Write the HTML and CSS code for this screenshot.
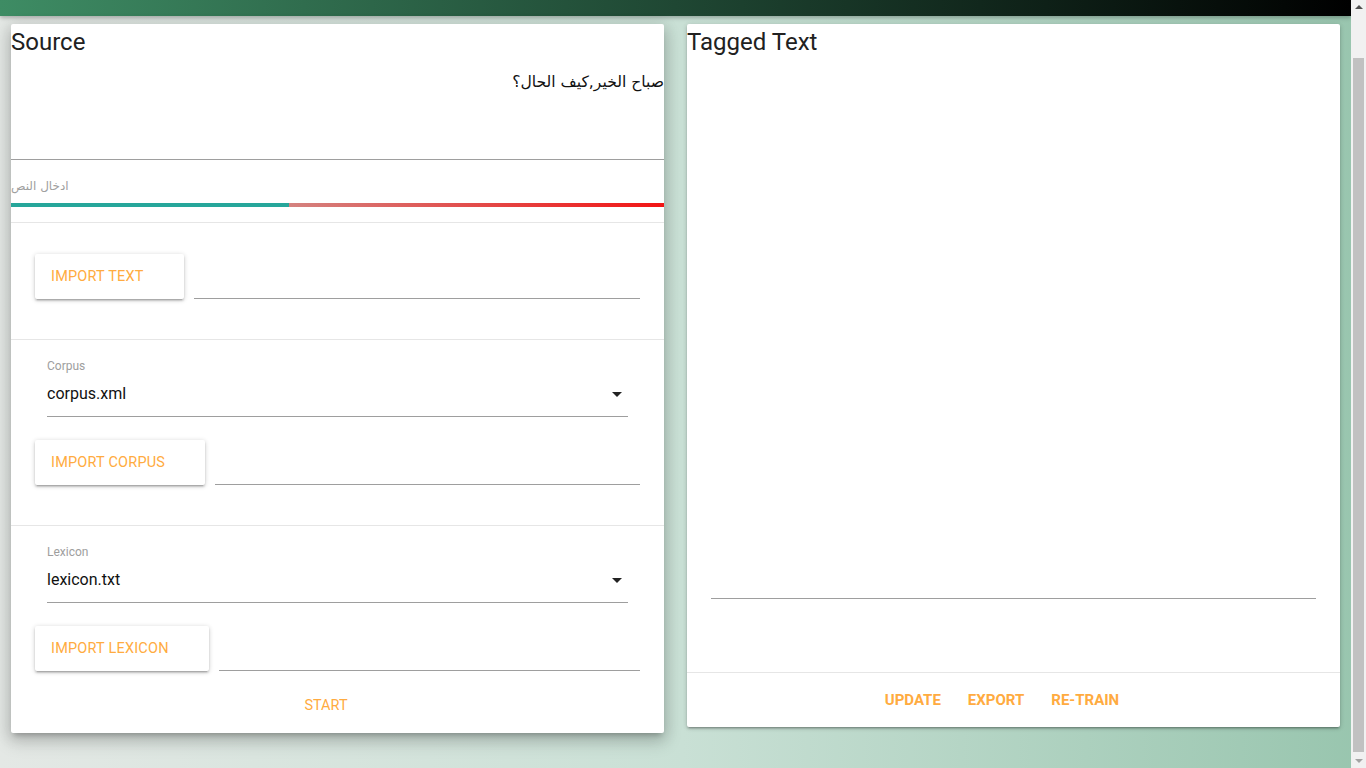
FILE: index.html
```html
<!DOCTYPE html>
<html lang="en">
<head>
<meta charset="utf-8">
<title>Tagger</title>
<link rel="stylesheet" href="styles.css">
</head>
<body>
<header class="topbar"></header>
<main class="cards">
  <section class="card card-source">
    <h2 class="card-title">Source</h2>
    <div class="source-field" dir="rtl">صباح الخير,كيف الحال؟</div>
    <div class="source-label"><span dir="rtl">ادخال النص</span></div>
    <div class="progress"><div class="progress-ok"></div><div class="progress-bad"></div></div>
    <div class="section section-text">
      <div class="file-row">
        <button class="raised-btn">IMPORT TEXT</button>
        <div class="file-line"></div>
      </div>
    </div>
    <div class="section section-select">
      <div class="select">
        <div class="select-label">Corpus</div>
        <div class="select-value"><span>corpus.xml</span><span class="caret"></span></div>
      </div>
      <div class="file-row">
        <button class="raised-btn">IMPORT CORPUS</button>
        <div class="file-line"></div>
      </div>
    </div>
    <div class="section section-select section-last">
      <div class="select">
        <div class="select-label">Lexicon</div>
        <div class="select-value"><span>lexicon.txt</span><span class="caret"></span></div>
      </div>
      <div class="file-row">
        <button class="raised-btn">IMPORT LEXICON</button>
        <div class="file-line"></div>
      </div>
    </div>
    <div class="source-actions">
      <button class="flat-btn">START</button>
    </div>
  </section>
  <section class="card card-tagged">
    <h2 class="card-title">Tagged Text</h2>
    <div class="tagged-body">
      <div class="tagged-field"></div>
    </div>
    <div class="tagged-actions">
      <button class="flat-btn strong">UPDATE</button>
      <button class="flat-btn strong">EXPORT</button>
      <button class="flat-btn strong">RE-TRAIN</button>
    </div>
  </section>
</main>
<div class="scrollbar" aria-hidden="true">
  <span class="sb-arrow sb-up"></span>
  <span class="sb-thumb"></span>
  <span class="sb-arrow sb-down"></span>
</div>
</body>
</html>
```
FILE: styles.css
```css
html {
  background: linear-gradient(to right, #e4e8e5 0%, #c9e0d5 50%, #98c5ae 100%);
  min-height: 100%;
}
body {
  margin: 0;
  min-height: 813px;
  font-family: "Roboto", "DejaVu Sans", sans-serif;
  color: #212121;
}
.topbar {
  height: 16px;
  margin-right: 15px;
  background: linear-gradient(to right, #3e8c64 0%, #1f4733 50%, #000 100%);
  box-shadow: 0 2px 4px rgba(0,0,0,0.25);
}
.cards {
  display: flex;
  align-items: flex-start;
  gap: 23px;
  padding: 8px 26px 0 11px;
}
.card {
  flex: 1;
  min-width: 0;
  background: #fff;
  border-radius: 2px;
}
.card-source {
  box-shadow: 0 8px 17px 2px rgba(0,0,0,0.14), 0 3px 14px 2px rgba(0,0,0,0.12), 0 5px 5px -3px rgba(0,0,0,0.2);
}
.card-tagged {
  box-shadow: 0 2px 2px 0 rgba(0,0,0,0.14), 0 3px 1px -2px rgba(0,0,0,0.12), 0 1px 5px 0 rgba(0,0,0,0.2);
}
.card-title {
  margin: 0;
  font-size: 24px;
  font-weight: 400;
  line-height: 36px;
  color: #212121;
}
.source-field {
  height: 100px;
  box-sizing: border-box;
  padding-top: 12px;
  font-size: 15.6px;
  line-height: 20px;
  font-family: "DejaVu Sans", sans-serif;
  text-align: right;
  border-bottom: 1px solid #9e9e9e;
  color: #111;
}
.source-label {
  height: 43px;
  box-sizing: border-box;
  padding-top: 18px;
  font-size: 12px;
  line-height: 16px;
  color: #a0a0a0;
  font-family: "DejaVu Sans", sans-serif;
}
.progress {
  display: flex;
  height: 4px;
  margin-bottom: 15px;
}
.progress-ok {
  width: 278px;
  background: #26a69a;
}
.progress-bad {
  flex: 1;
  background: linear-gradient(to right, #d4827f, #f21414);
}
.section {
  border-top: 1px solid #e6e6e6;
  padding: 31px 24px 40px 24px;
}
.section-select {
  padding-top: 19px;
}
.section-last {
  padding-bottom: 0;
}
.file-row {
  display: flex;
  align-items: flex-end;
}
.raised-btn {
  height: 45px;
  padding: 0 40px 0 16px;
  border: none;
  border-radius: 2px;
  background: #fff;
  color: #ffab40;
  font-family: "Roboto", sans-serif;
  font-size: 14.5px;
  letter-spacing: 0.2px;
  text-align: left;
  box-shadow: 0 2px 2px 0 rgba(0,0,0,0.14), 0 3px 1px -2px rgba(0,0,0,0.12), 0 1px 5px 0 rgba(0,0,0,0.2);
}
.file-line {
  flex: 1;
  height: 1px;
  margin-left: 10px;
  background: #9e9e9e;
}
.select {
  margin: 0 12px 23px 12px;
  border-bottom: 1px solid #9e9e9e;
  padding-bottom: 12px;
}
.select-label {
  font-size: 12px;
  line-height: 14px;
  color: #9e9e9e;
}
.select-value {
  display: flex;
  align-items: center;
  justify-content: space-between;
  margin-top: 11px;
  font-size: 16px;
  line-height: 20px;
  color: #111;
}
.caret {
  width: 0;
  height: 0;
  margin-right: 6px;
  border-left: 5px solid transparent;
  border-right: 5px solid transparent;
  border-top: 5px solid #222;
}
.source-actions {
  display: flex;
  justify-content: center;
  padding: 21px 23px 13px 0;
}
.flat-btn {
  border: none;
  background: transparent;
  padding: 0;
  color: #ffab40;
  font-family: "Roboto", sans-serif;
  font-size: 14.5px;
  line-height: 28px;
}
.flat-btn.strong {
  font-weight: 700;
  font-size: 15px;
  margin-right: 27px;
}
.flat-btn.strong:first-child {
  margin-left: 4px;
}
.tagged-body {
  height: 612px;
  box-sizing: border-box;
  padding: 0 24px;
}
.tagged-field {
  height: 538px;
  border-bottom: 1px solid #9e9e9e;
}
.tagged-actions {
  display: flex;
  justify-content: center;
  align-items: center;
  height: 54px;
  border-top: 1px solid #e6e6e6;
}
.scrollbar {
  position: fixed;
  top: 0;
  right: 0;
  bottom: 0;
  width: 15px;
  background: #f1f1f1;
}
.sb-thumb {
  position: absolute;
  left: 2px;
  right: 2px;
  top: 58px;
  bottom: 16px;
  background: #c1c1c1;
}
.sb-arrow {
  position: absolute;
  left: 4px;
  width: 0;
  height: 0;
  border-left: 4px solid transparent;
  border-right: 4px solid transparent;
}
.sb-up {
  top: 5px;
  border-bottom: 4px solid #505050;
}
.sb-down {
  bottom: 5px;
  border-top: 4px solid #a3a3a3;
}
```
